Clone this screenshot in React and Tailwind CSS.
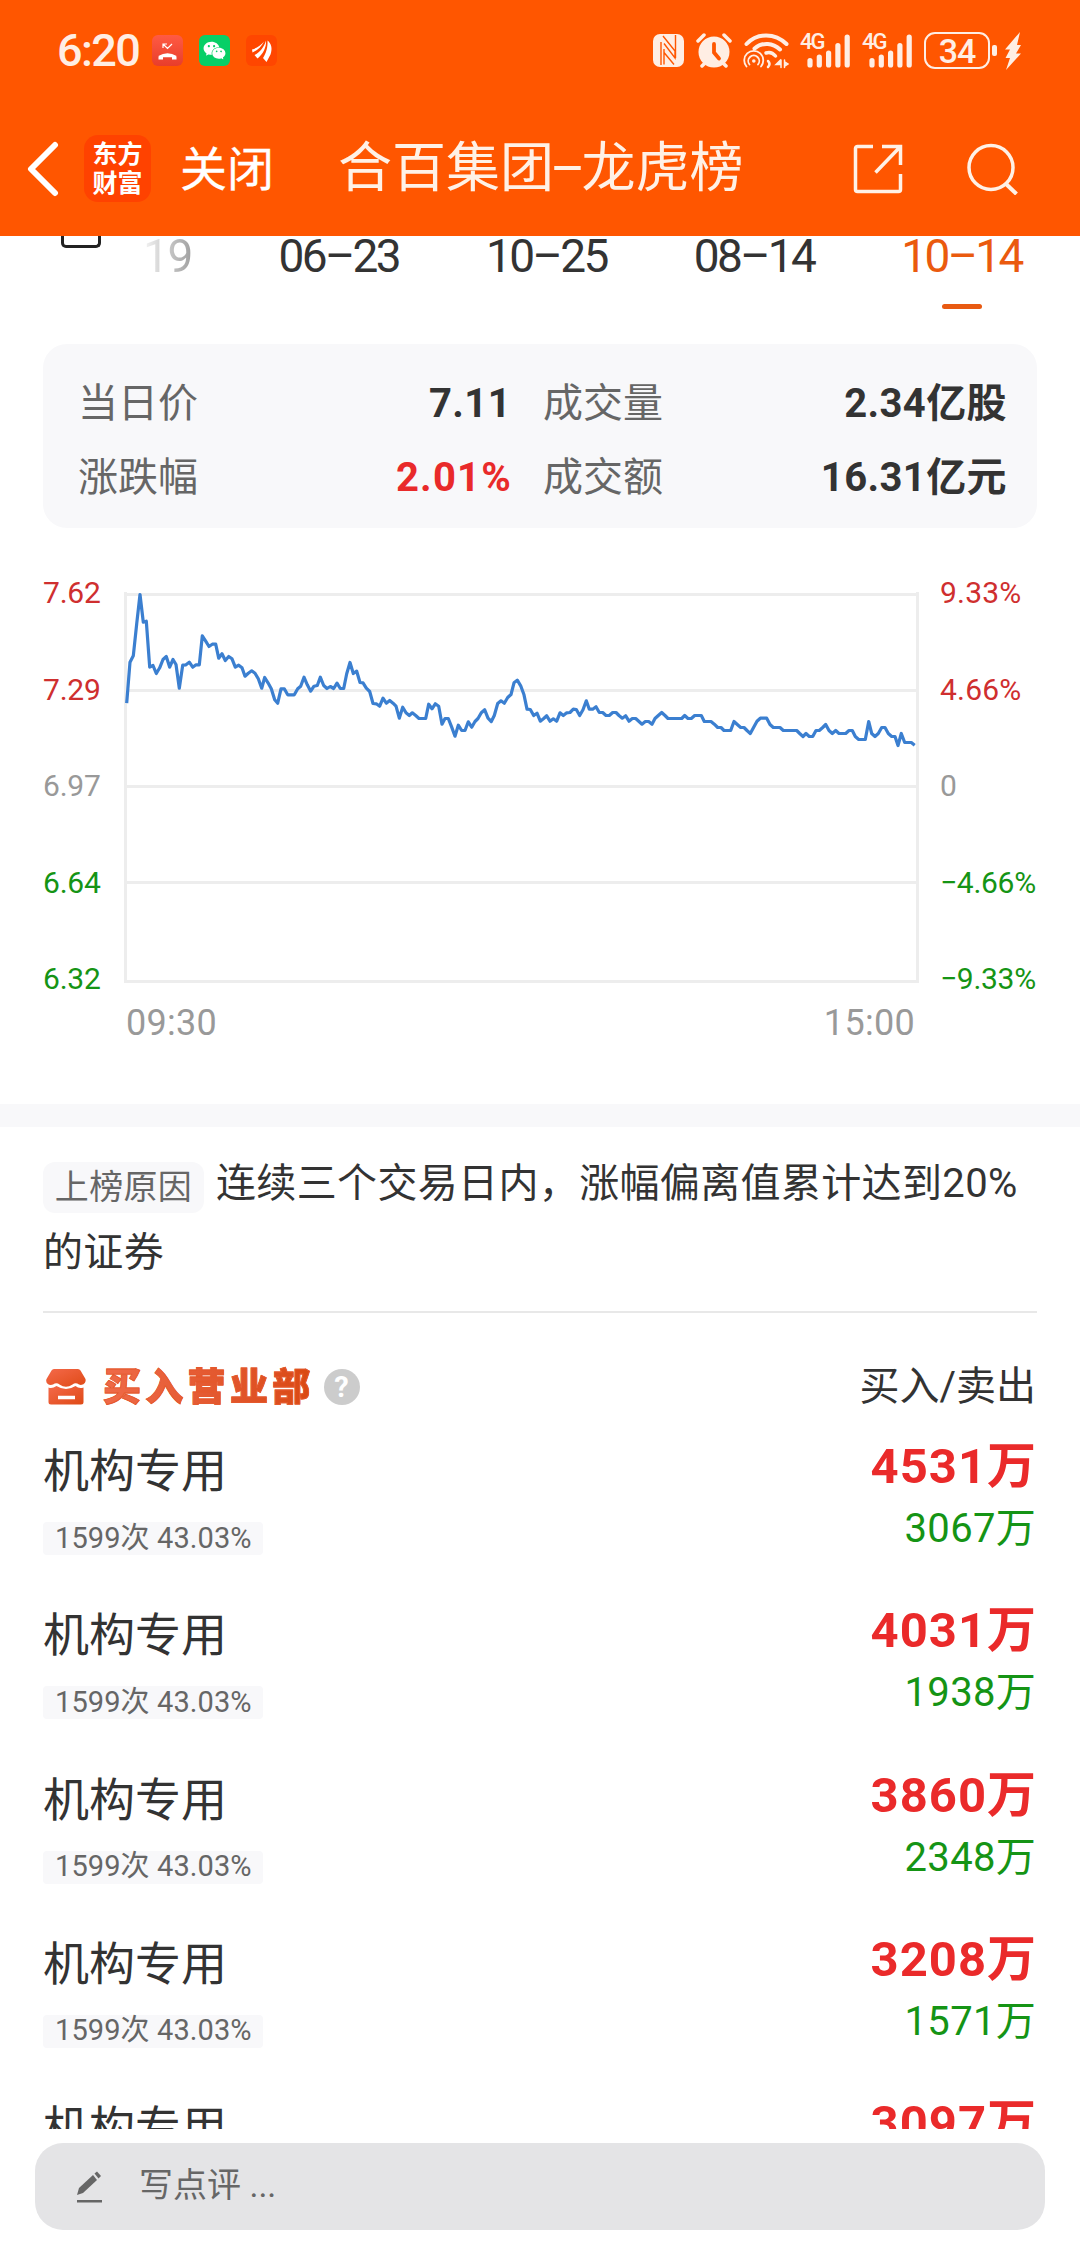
import React from 'react';
import { AiFillWechat } from 'react-icons/ai';

const dates = [
  { label: '06–23' },
  { label: '10–25' },
  { label: '08–14' },
  { label: '10–14', active: true },
];

const summary = [
  { label: '当日价', value: '7.11' },
  { label: '成交量', value: '2.34亿股' },
  { label: '涨跌幅', value: '2.01%', up: true },
  { label: '成交额', value: '16.31亿元' },
];

const prices = [
  { value: '7.62', color: 'text-[#cf2f2f]' },
  { value: '7.29', color: 'text-[#cf2f2f]' },
  { value: '6.97', color: 'text-[#999999]' },
  { value: '6.64', color: 'text-[#159415]' },
  { value: '6.32', color: 'text-[#159415]' },
];

const percents = [
  { value: '9.33%', color: 'text-[#cf2f2f]' },
  { value: '4.66%', color: 'text-[#cf2f2f]' },
  { value: '0', color: 'text-[#999999]' },
  { value: '−4.66%', color: 'text-[#159415] tracking-[-0.300px]' },
  { value: '−9.33%', color: 'text-[#159415] tracking-[-0.300px]' },
];

const seats = [
  { name: '机构专用', tag: '1599次 43.03%', buy: '4531万', sell: '3067万' },
  { name: '机构专用', tag: '1599次 43.03%', buy: '4031万', sell: '1938万' },
  { name: '机构专用', tag: '1599次 43.03%', buy: '3860万', sell: '2348万' },
  { name: '机构专用', tag: '1599次 43.03%', buy: '3208万', sell: '1571万' },
  { name: '机构专用', buy: '3097万' },
];

// intraday price line, in thirds of a pixel, one list per stretch of the session
const morning = '290,428 300,305 310,286 320,190 330,102 340,185 349,182 359,320 369,315 379,339 389,322 399,297 409,288 419,320 429,297 438,312 448,383 458,314 468,313 478,305 488,320 498,313 508,313 517,226 527,242 537,258 547,251 557,251 566,293 576,280 586,300 596,288 606,295 616,320 626,314 636,322 645,347 655,338 665,331 675,338 685,355 695,383 704,351 714,367 724,385 734,418 743,428 753,385 763,385 773,403 783,403 793,403 803,385 812,377 822,350 832,373 842,392 852,377 862,375 871,350 881,375 891,384 901,378 911,384 921,368 931,384 941,384 950,340 960,306 970,339 980,332 990,366 999,367 1009,383 1019,393';
const midday = '9,309 19,310 29,317 39,293 49,308 59,300 69,308 78,317 88,353 98,320 108,337 118,345 127,337 137,345 147,354 157,354 167,354 176,311 186,325 196,310 206,317 216,371 225,354 235,354 245,380 255,407 265,374 275,390 285,390 295,364 305,380 315,363 324,354 334,337 344,328 354,353 364,363 373,345 383,309 393,301 403,308 413,291 423,282 432,247 442,239 452,256 462,283 471,326 481,327 491,345 501,338 511,362 521,354 530,346 540,362 550,355 560,362 570,337 580,345 590,337 600,336 610,326 619,327 629,345 639,328 649,301 658,326 668,326 678,319 688,336 698,336 708,345 718,345 728,336 738,336 747,345 757,353 767,346 777,362 787,354 797,354 807,363 816,371 826,363 836,363';
const afternoon = '6,491 15,474 25,465 35,456 45,465 54,474 95,474 104,465 114,474 124,474 134,465 154,465 163,483 183,483 193,491 203,501 213,501 222,510 242,510 252,483 262,492 272,501 282,501 291,510 301,519 311,500 321,482 331,473 350,473 360,492 370,501 390,501 400,510 440,510 449,519 459,528 468,519 478,528 488,528 498,510 508,510 518,501 527,492 537,510 547,519 557,510 567,519 587,519 597,510 607,510 616,528 626,537 646,537 656,483 665,519 675,528 685,519 695,501 705,501 715,519 725,528 735,528 744,555 754,519 764,546 784,546 794,554';

const shift = (points, dx, dy) =>
  points.split(' ').map((p) => {
    const [x, y] = p.split(',').map(Number);
    return `${(x / 3 + dx).toFixed(1)},${(y / 3 + dy).toFixed(1)}`;
  });

const linePoints = [
  ...shift(morning, -94, -30.5),
  ...shift(midday, 246, 9.5),
  ...shift(afternoon, 526, -30.5),
].join(' ');

function Signal() {
  return (
    <div className="relative w-[50px] h-[36px]">
      <span className="absolute left-0 top-0 text-[22px] leading-[18px] font-medium tracking-[-2px]">4G</span>
      <svg viewBox="0 0 50 36" className="w-[50px] h-[36px]" stroke="currentColor" strokeWidth="5.2" strokeLinecap="round">
        <path d="M10 27.500v4.500M19.300 24v8M28.600 20v12M37.900 12.500v19.500M47.200 4v28" />
      </svg>
    </div>
  );
}

function StatusBar() {
  return (
    <div className="flex items-center h-[101px] pl-[57px] text-[#ffeee4]">
      <span className="w-[95px] text-[45px] leading-none font-medium tracking-[-1.600px]">6:20</span>
      <div className="flex gap-4">
        <div className="w-[31px] h-[31px] rounded-md bg-gradient-to-b from-[#ff5a43] to-[#e83d2b]">
          <svg viewBox="0 0 31 31" fill="none" stroke="#fff">
            <path d="M11.500 9.500l4 4 4.500-4.500M11 13V9h4" strokeWidth="1.200" />
            <path d="M6.500 24.500v-2.500c3-3 15-3 18 0v2.500h-4.500v-2.200h-9v2.200z" fill="#fff" stroke="none" />
            <path d="M7 22q8.500-5 17 0" strokeWidth="2.500" />
          </svg>
        </div>
        <div className="flex items-center justify-center w-[31px] h-[31px] rounded-md bg-[#07cf66]">
          <AiFillWechat className="w-[25px] h-[25px] text-white" />
        </div>
        <div className="w-[31px] h-[31px] rounded-md bg-[#ff4600]">
          <svg viewBox="0 0 31 31" fill="#fff">
            <path d="M6 14.500C11 13 15 10 18 6.500C15.500 12 11 15.500 6.500 17.500z" />
            <path d="M8.500 20C14 17.500 18 12 20 5.500C20.500 12.500 17 19 11.500 23.500z" />
            <path d="M17 23C20 18.500 22 12 21.500 5.500C25.500 9 26.500 13 24.500 19.500L20.500 27z" />
          </svg>
        </div>
      </div>
      <div className="flex items-center ml-auto pr-[58px]">
        <svg viewBox="0 0 31 33" className="w-[31px] h-[33px] mr-[12px]" fill="none">
          <rect width="31" height="33" rx="7" fill="currentColor" />
          <path d="M8 8v23M10 2l12 15v7L11 9.500M22.500 1v23M11 15v15.500M11 18.500l10 12" stroke="#ff5600" strokeWidth="1.400" />
        </svg>
        <svg viewBox="0 0 36 36" className="w-[36px] h-[36px] mr-[11px]" fill="currentColor">
          <circle cx="18" cy="19" r="15.500" />
          <path d="M2 8l6-6M34 8l-6-6M6 33l5-5M30 33l-5-5" stroke="currentColor" strokeWidth="3.500" strokeLinecap="round" />
          <path d="M18 11v8.500l5 6" stroke="#ff5600" strokeWidth="3.800" strokeLinecap="round" fill="none" />
        </svg>
        <svg viewBox="0 0 46 36" className="w-[46px] h-[36px] mr-[11px]" fill="none" stroke="currentColor" strokeLinecap="round">
          <path d="M3.500 11C14-0.500 32-0.500 43.500 11" strokeWidth="4" />
          <path d="M11.500 15.500C20 8.500 30 10 37 16.500" strokeWidth="4" />
          <path d="M23 20c4-1.500 7 0 9.500 3" strokeWidth="3.500" />
          <path d="M3.500 33.500A9.500 9.500 0 1 1 18 33.500M6.500 31.500A5.500 5.500 0 1 1 15 31.500" strokeWidth="1.800" />
          <circle cx="10.800" cy="28" r="1.800" fill="currentColor" stroke="none" />
          <path d="M25 28q3 3 0 6" strokeWidth="2.500" />
          <path d="M33 31.500l4-4v4zM38 27v7.500M41.500 27v7.500M42 29l3 2-3 2" strokeWidth="1.500" fill="currentColor" />
        </svg>
        <div className="flex gap-[12px] mr-[12px]">
          <Signal />
          <Signal />
        </div>
        <div className="flex items-center justify-center w-[66px] h-[37px] rounded-[11px] border-[2.500px] border-current text-[34px] leading-none font-medium tracking-[-1px]">34</div>
        <div className="w-[5px] h-[11px] ml-[2px] rounded-[2px] bg-current" />
        <svg viewBox="0 0 18 38" className="w-[18px] h-[38px] ml-[7px]" fill="currentColor">
          <path d="M16 0L1 17.500h5L1.500 26h4.500L2 38L17 21.500h-5L17 13h-4z" />
        </svg>
      </div>
    </div>
  );
}

function NavBar() {
  return (
    <div className="flex items-center h-[135px] pl-[26px] text-white">
      <svg viewBox="0 0 33 56" className="w-[33px] h-[56px]" fill="none" stroke="currentColor" strokeWidth="6" strokeLinecap="round" strokeLinejoin="round">
        <path d="M29 4L5 28l24 24" />
      </svg>
      <div className="flex flex-col items-center justify-center w-[67px] h-[67px] ml-[25px] rounded-[14px] bg-[#ff4200] text-[25px] leading-[29px] font-bold">
        <span>东方</span>
        <span>财富</span>
      </div>
      <span className="ml-[29px] pt-[2px] text-[47px] leading-none [-webkit-text-stroke:0.300px]">关闭</span>
      <h1 className="ml-[64px] text-[54px] leading-none text-[#fff1e6]">
        合百集团<span className="ml-[-4px] tracking-[-4px]">–</span>龙虎榜
      </h1>
      <div className="flex items-center ml-auto pr-[61px] gap-[64px] text-[#fff1e6]">
        <svg viewBox="0 0 50 50" className="w-[50px] h-[50px]" fill="none" stroke="currentColor" strokeWidth="3.500">
          <path d="M20 2.500H4.500a2 2 0 0 0-2 2V45.500a2 2 0 0 0 2 2H45.500a2 2 0 0 0 2-2V30" />
          <path d="M29 2.500h18.500V21M47 3L22.500 28.500" />
        </svg>
        <svg viewBox="0 0 52 52" className="w-[52px] h-[52px]" fill="none" stroke="currentColor" strokeWidth="3.500">
          <circle cx="24" cy="24.500" r="22" />
          <path d="M38 40l11.500 11" strokeWidth="4" />
        </svg>
      </div>
    </div>
  );
}

function DateTabs() {
  return (
    <div className="flex h-[108px] shrink-0 pl-[61px] text-[46px] leading-[40px]">
      <div className="w-[40px] h-[12px] border-[3.500px] border-t-0 border-[#222] rounded-b-[5px]" />
      <span className="w-[91px] h-[40px] text-right tracking-[-1.300px] bg-gradient-to-r from-white from-40% to-[#a0a0a0] bg-clip-text text-transparent">19</span>
      <div className="flex ml-[43px]">
        {dates.map((d) => (
          <div key={d.label} className={`flex flex-col items-center w-[207.600px] tracking-[-2.600px] ${d.active ? 'text-[#ea5a0e]' : 'text-[#333]'}`}>
            <span>{d.label}</span>
            {d.active && <div className="w-[40px] h-[5px] mt-[28px] rounded-full bg-[#e85a12]" />}
          </div>
        ))}
      </div>
    </div>
  );
}

function Summary() {
  return (
    <div className="grid shrink-0 grid-cols-[433px_464px] gap-x-[32px] content-start mx-[43px] h-[184px] pl-[35px] pt-[23px] rounded-[24px] bg-[#f8f8fa] text-[40px]">
      {summary.map((item) => (
        <div key={item.label} className="flex items-center justify-between h-[74px] leading-none">
          <span className="text-[#666]">{item.label}</span>
          <span className={`font-bold ${item.up ? 'text-[#e92a2a] tracking-[1.200px] -mr-px' : 'text-[#333] tracking-[0.400px]'}`}>{item.value}</span>
        </div>
      ))}
    </div>
  );
}

function Chart() {
  return (
    <div className="h-[576px] shrink-0 pt-[46px]">
      <div className="flex">
        <div className="flex flex-col justify-between w-[81px] h-[426px] -mt-px ml-[43px] text-[30px] tracking-[-0.200px]">
          {prices.map((p) => (
            <span key={p.value} className={`h-[40px] leading-[40px] ${p.color}`}>{p.value}</span>
          ))}
        </div>
        <svg viewBox="0 0 796 394" className="w-[796px] h-[394px] mt-[17px]" fill="none">
          <path d="M0 3.500h795M0 99.500h795M0 195.500h795M0 291.500h795M0 390.500h795M1.500 1v390M793.500 1v390" stroke="#ededed" strokeWidth="3" />
          <polyline points={linePoints} stroke="#3b7fd0" strokeWidth="3.200" strokeLinejoin="round" />
        </svg>
        <div className="flex flex-col justify-between h-[426px] -mt-px ml-[20px] text-[30px] tracking-[0.200px]">
          {percents.map((p) => (
            <span key={p.value} className={`h-[40px] leading-[40px] ${p.color}`}>{p.value}</span>
          ))}
        </div>
      </div>
      <div className="flex justify-between ml-[126px] w-[789px] mt-[4px] text-[36px] leading-[40px] tracking-[0.300px] text-[#999]">
        <span>09:30</span>
        <span>15:00</span>
      </div>
    </div>
  );
}

function Reason() {
  return (
    <div className="mx-[43px] h-[186px] shrink-0 pt-[22px] border-b-2 border-[#e8e8e8] text-[40px] leading-[69px] tracking-[0.350px] text-[#333] whitespace-nowrap">
      <div className="flex items-center h-[69px]">
        <span className="flex items-center justify-center w-[161px] h-[51px] mt-[8px] mr-[12px] pb-[2px] rounded-[12px] bg-[#f8f8fa] text-[34px] leading-none text-[#666]">上榜原因</span>
        <span>连续三个交易日内，涨幅偏离值累计达到20%</span>
      </div>
      <div>的证券</div>
    </div>
  );
}

function SeatsHeader() {
  return (
    <div className="flex items-center h-[76px] shrink-0 mt-[36px] pl-[46px] pr-[44px]">
      <svg viewBox="0 0 40 36" className="w-[40px] h-[36px]">
        <defs>
          <linearGradient id="shop" x1="0" y1="0" x2="1" y2="1">
            <stop offset="0" stopColor="#f4694a" />
            <stop offset="1" stopColor="#df4a16" />
          </linearGradient>
        </defs>
        <path d="M8 0H32a3 3 0 0 1 2.500 1.500L39.500 10c1 4-3 7-6.500 5.500Q29.500 13 26.500 15.500Q20 20 13.500 15.500Q10.500 13 7 15.500C3 17-1 14 .5 10L5.500 1.500A3 3 0 0 1 8 0z" fill="url(#shop)" />
        <path d="M2.500 18.500Q6 20 10.500 17Q20 23 29.500 17Q33 20 37.500 18.500V33a2.500 2.500 0 0 1-2.500 2.500H5A2.500 2.500 0 0 1 2.500 33z" fill="url(#shop)" />
        <path d="M12 28.500h17" stroke="#fff" strokeWidth="3.500" />
      </svg>
      <h2 className="ml-[17px] text-[38px] leading-[44px] font-black tracking-[4.300px] bg-gradient-to-r from-[#ef6a48] to-[#d9480f] bg-clip-text text-transparent [-webkit-text-stroke:0.800px_#e5582c]">买入营业部</h2>
      <span className="flex items-center justify-center w-[36px] h-[36px] ml-[9px] rounded-full bg-[#ccc] text-[29px] leading-none font-bold text-white">?</span>
      <span className="ml-auto text-[40px] leading-none text-[#333]">买入/卖出</span>
    </div>
  );
}

function SeatRow({ seat }) {
  return (
    <div className="flex justify-between h-[164.300px] px-[43px] shrink-0">
      <div>
        <div className="h-[50px] pt-px text-[46px] leading-[50px] text-[#333]">{seat.name}</div>
        {seat.tag && (
          <div className="flex items-center h-[33px] w-[220px] mt-[27px] pl-[12px] pb-px rounded-[4px] bg-[#f8f8fa] text-[29px] leading-none tracking-[0.100px] text-[#666]">{seat.tag}</div>
        )}
      </div>
      <div className="text-right">
        <div className="h-[50px] -mt-[3px] text-[49px] leading-[50px] font-bold tracking-[1px] text-[#ea2a2a]">{seat.buy}</div>
        {seat.sell && <div className="h-[50px] mt-[12px] pr-px text-[40px] leading-[50px] tracking-[0.300px] text-[#159415]">{seat.sell}</div>}
      </div>
    </div>
  );
}

function CommentBar() {
  return (
    <div className="h-[115px] shrink-0 pt-[14px] px-[35px] bg-white">
      <div className="flex items-center h-[87px] rounded-[28px] bg-[#e4e4e6] pl-[41px] text-[#666]">
        <svg viewBox="0 0 28 34" className="w-[28px] h-[34px]" fill="currentColor">
          <path d="M1 25l2-7L17 5l4 5L7 23z" />
          <path d="M18.500 3.500L21 1.500l4 4.500-2.500 2.500z" />
          <path d="M1 30h25v2.500H1z" />
        </svg>
        <span className="ml-[35px] -mt-[4px] text-[34px] leading-none">写点评 ...</span>
      </div>
    </div>
  );
}

export default function App() {
  return (
    <div className="flex flex-col w-[1080px] h-[2244px] overflow-hidden bg-white font-[Roboto,'Noto_Sans_CJK_SC',sans-serif]">
      <header className="h-[236px] shrink-0 bg-[#ff5600]">
        <StatusBar />
        <NavBar />
      </header>
      <main className="flex flex-col h-[1893px] shrink-0 overflow-hidden">
        <DateTabs />
        <Summary />
        <Chart />
        <div className="h-[23px] shrink-0 bg-[#f8f8fa]" />
        <Reason />
        <SeatsHeader />
        <div className="mt-[20px] shrink-0">
          {seats.map((seat, i) => (
            <SeatRow key={i} seat={seat} />
          ))}
        </div>
      </main>
      <CommentBar />
    </div>
  );
}
